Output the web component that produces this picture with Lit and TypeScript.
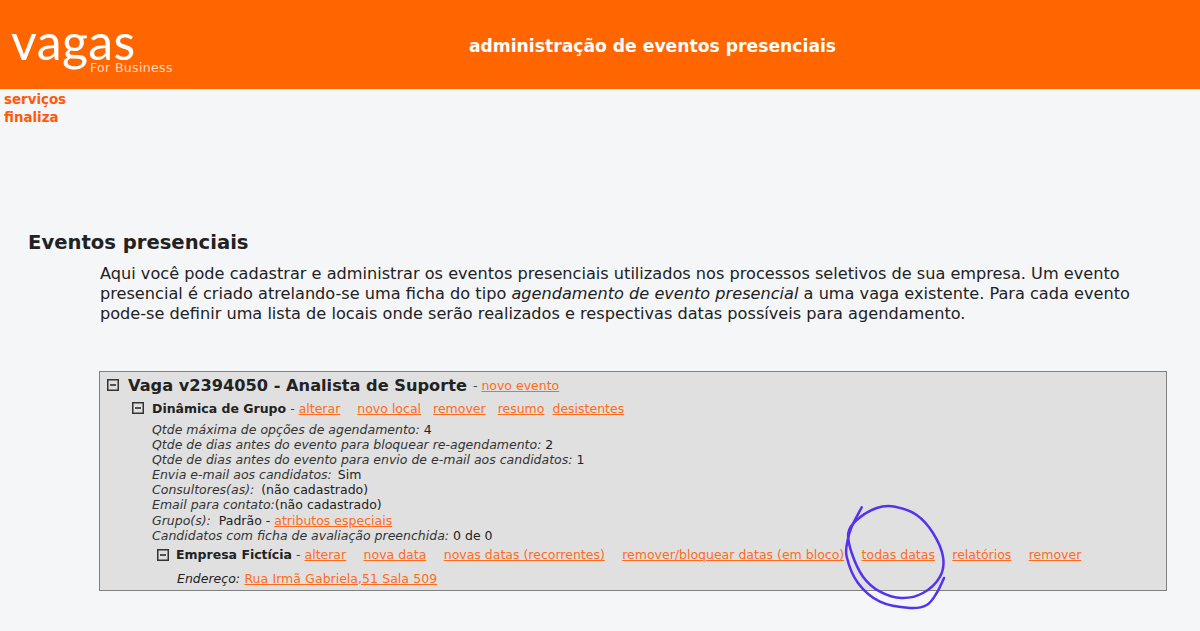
import { LitElement, html, css, svg } from "lit";
import { customElement } from "lit/decorators.js";

const minus = (size: number) => html`<svg class="box" width=${size} height=${size} viewBox="0 0 12 12"><rect x=".75" y=".75" width="10.5" height="10.5" fill="none" stroke="#333" stroke-width="1.5"/><path d="M3 6h6" stroke="#222" stroke-width="1.5"/></svg>`;

const smooth = (p: number[][], closed = false) => {
  const at = (i: number) => closed ? p[(i + p.length) % p.length] : p[Math.max(0, Math.min(p.length - 1, i))];
  let d = `M${p[0][0]} ${p[0][1]}`;
  const n = closed ? p.length : p.length - 1;
  for (let i = 0; i < n; i++) {
    const [a, b, c, e] = [at(i - 1), at(i), at(i + 1), at(i + 2)];
    d += `C${(b[0] + (c[0] - a[0]) / 6).toFixed(1)} ${(b[1] + (c[1] - a[1]) / 6).toFixed(1)} ${(c[0] - (e[0] - b[0]) / 6).toFixed(1)} ${(c[1] - (e[1] - b[1]) / 6).toFixed(1)} ${c[0]} ${c[1]}`;
  }
  return d;
};
const outer = smooth([[861.7,507.3],[851.7,526.7],[847.7,540],[846.7,556.7],[858,583],[880,601.7],[910,608],[926.7,605],[936.7,593],[944,578]]);
const inner = smooth([[848.3,533],[856.7,520],[876.7,508],[895,506.7],[916.7,515],[933,533],[943,556.7],[940,576.7],[923,593],[901.7,598],[880,591.7],[863,576.7],[851.7,553]], true);

@customElement("app-root")
export class AppRoot extends LitElement {
  static styles = css`
    :host { display: block; position: relative; height: 631px; overflow: hidden; background: #f4f6f8; font-family: "DejaVu Sans", Verdana, sans-serif; color: #222; }
    a { color: #ff6b1a; text-decoration: underline; }
    .header { height: 90px; background: #ff6600; display: grid; grid-template-columns: 410px 485px 1fr; align-items: center; border-bottom: 1px solid #f5f5f5; box-sizing: border-box; }
    .logo { color: #fff; position: relative; height: 89px; }
    .logo .word { position: absolute; left: 11px; top: 11px; font: 400 50px/60px Lato, sans-serif; letter-spacing: 0.4px; }
    .logo .sub { position: absolute; left: 90px; top: 60px; font: 400 12.5px/15px "DejaVu Sans", sans-serif; color: #ffd9bd; letter-spacing: .35px; white-space: nowrap; }
    .title { text-align: center; color: #fff; font-weight: 700; font-size: 17.2px; margin: 2px 0 0; white-space: nowrap; }
    .nav { padding: 1px 0 0 4px; font-weight: 700; font-size: 13.4px; line-height: 18px; color: #ff5a0a; height: 140px; }
    .nav div { height: 18px; }
    h1 { margin: 0 0 0 28px; font-size: 19.6px; line-height: 24px; font-weight: 700; color: #222; }
    .intro { margin: 9px 40px 0 100px; font-size: 16.15px; line-height: 20px; color: #222; }
    .panel { margin: 47px 33px 0 99px; height: 220px; box-sizing: border-box; background: #e0e0e0; border: 1px solid #808080; padding: 3px 0 0 7px; }
    .vaga { display: flex; align-items: center; gap: 6px; height: 20px; }
    .vaga .box { margin-right: 3px; }
    .vaga b { font-size: 16.2px; }
    .dash { color: #444; }
    .small { font-size: 12.5px; }
    .sec { display: flex; align-items: center; height: 20px; margin: 3px 0 0 25px; gap: 8px; font-size: 12.5px; white-space: pre; }
    .list { margin: 4px 0 0 45px; font-size: 12.5px; line-height: 15.1px; }
    .list i { color: #333; }
    .sec2 { margin: 2px 0 0 50px; display: flex; align-items: center; height: 20px; gap: 7px; font-size: 12.5px; white-space: pre; }
    .addr { margin: 6px 0 0 70px; font-size: 12.5px; line-height: 15px; word-spacing: .4px; }
    .g8 { margin-left: 8px; }
    .g12 { margin-left: 12px; }
    .g17 { margin-left: 17px; }
    .g174 { margin-left: 17.4px; }
    .m2 { margin-left: 2px; }
    .m3 { margin-left: 3px; }
    .m5 { margin-left: 4px; }
    .scribble { position: absolute; left: 0; top: 0; pointer-events: none; }
    .box { flex: none; }
  `;

  render() {
    return html`
      <div class="header">
        <div class="logo"><span class="word">vagas</span><span class="sub">For Business</span></div>
        <p class="title">administração de eventos presenciais</p>
        <div></div>
      </div>
      <div class="nav"><div>serviços</div><div>finaliza</div></div>
      <h1>Eventos presenciais</h1>
      <p class="intro">Aqui você pode cadastrar e administrar os eventos presenciais utilizados nos processos seletivos de sua empresa. Um evento presencial é criado atrelando-se uma ficha do tipo <i>agendamento de evento presencial</i> a uma vaga existente. Para cada evento pode-se definir uma lista de locais onde serão realizados e respectivas datas possíveis para agendamento.</p>
      <div class="panel">
        <div class="vaga">${minus(12)}<b>Vaga v2394050 - Analista de Suporte</b><span class="small"><span class="dash">-</span> <a href="#">novo evento</a></span></div>
        <div class="sec">${minus(12)}<span><b>Dinâmica de Grupo</b> <span class="dash">-</span> <a href="#">alterar</a><a class="g17" href="#">novo local</a><a class="g12" href="#">remover</a><a class="g12" href="#">resumo</a><a class="g8" href="#">desistentes</a></span></div>
        <div class="list">
          <div><i>Qtde máxima de opções de agendamento:</i> 4</div>
          <div><i>Qtde de dias antes do evento para bloquear re-agendamento:</i> 2</div>
          <div><i>Qtde de dias antes do evento para envio de e-mail aos candidatos:</i> 1</div>
          <div><i>Envia e-mail aos candidatos:</i> <span class="m2">Sim</span></div>
          <div><i>Consultores(as):</i> <span class="m3">(não cadastrado)</span></div>
          <div><i>Email para contato:</i>(não cadastrado)</div>
          <div><i>Grupo(s):</i> <span class="m5">Padrão - <a href="#">atributos especiais</a></span></div>
          <div><i>Candidatos com ficha de avaliação preenchida:</i> 0 de 0</div>
        </div>
        <div class="sec2">${minus(12)}<span><b>Empresa Fictícia</b> <span class="dash">-</span> <a href="#">alterar</a><a class="g174" href="#">nova data</a><a class="g174" href="#">novas datas (recorrentes)</a><a class="g174" href="#">remover/bloquear datas (em bloco)</a><a class="g174" href="#">todas datas</a><a class="g174" href="#">relatórios</a><a class="g174" href="#">remover</a></span></div>
        <div class="addr"><i>Endereço:</i> <a href="#">Rua Irmã Gabriela,51 Sala 509</a></div>
      </div>
      <svg class="scribble" width="1200" height="631" fill="none" stroke="#5533ee" stroke-width="2.5" stroke-linecap="round">
        ${svg`<path d=${outer}/><path d=${inner}/>`}
      </svg>
    `;
  }
}
